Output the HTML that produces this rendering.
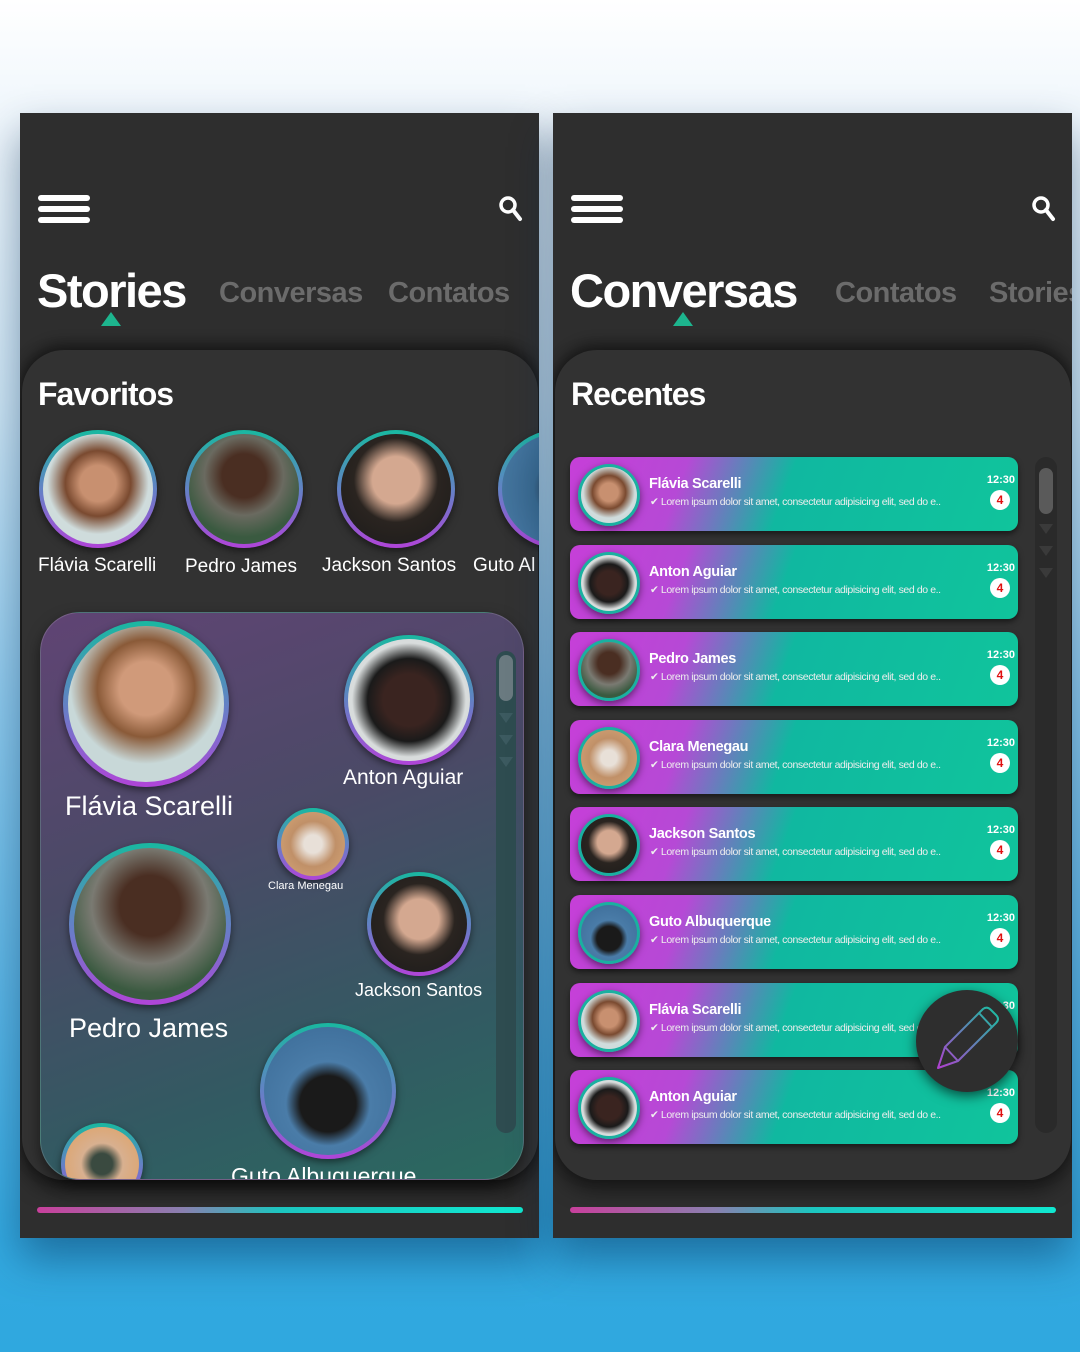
<!DOCTYPE html>
<html><head><meta charset="utf-8"><style>
*{margin:0;padding:0;box-sizing:border-box}
body{width:1080px;height:1352px;overflow:hidden;position:relative;font-family:"Liberation Sans",sans-serif;
background:linear-gradient(180deg,#ffffff 0px,#f4f9fd 80px,#cfe7f6 400px,#8fcbee 700px,#5ab6e6 1000px,#33a9e0 1240px,#2fa8df 1352px)}
.ph{position:absolute;top:113px;width:519px;height:1125px;background:#2e2e2e;overflow:hidden;box-shadow:0 20px 40px rgba(0,40,80,.45)}
.ab{position:absolute}
.menu{position:absolute;left:18px;top:82px;width:52px;height:30px}
.menu i{display:block;height:6px;background:#fff;border-radius:3px;margin-bottom:5px}
.title{position:absolute;top:150px;font-weight:bold;color:#fff;font-size:47px;letter-spacing:-1.5px}
.tab{position:absolute;top:164px;font-weight:bold;color:#6b6b6b;font-size:29px;letter-spacing:-.5px}
.tri{position:absolute;top:199px;width:0;height:0;border-left:10px solid transparent;border-right:10px solid transparent;border-bottom:14px solid #1db58e}
.inner{position:absolute;left:2px;top:237px;width:516px;height:830px;background:#323232;border-radius:42px;box-shadow:0 -6px 14px rgba(0,0,0,.45),0 10px 20px rgba(0,0,0,.5)}
.h2{position:absolute;top:263px;left:18px;font-weight:bold;color:#fff;font-size:32px;letter-spacing:-1px}
.av{position:absolute;border-radius:50%;background:linear-gradient(180deg,#19b8a0,#6a7cc8 55%,#b044d8);padding:4px;box-shadow:0 3px 8px rgba(0,0,0,.5)}
.av div{width:100%;height:100%;border-radius:50%}
.nm{position:absolute;color:#fff;font-size:19px;white-space:nowrap}
.bar{position:absolute;left:17px;top:1094px;width:486px;height:6px;border-radius:3px;background:linear-gradient(90deg,#c8409c,#8a80b0 30%,#1cc6c0 50%,#10e8d0)}
.card{position:absolute;left:17px;width:448px;height:74px;border-radius:10px;background:linear-gradient(110deg,#c63fd8 0%,#b649d6 25%,#10b8a0 48%,#10c49c 100%);box-shadow:0 3px 6px rgba(0,0,0,.5)}
.card .av{left:8px;top:7px;width:62px;height:62px;padding:3px;background:linear-gradient(#1ab0a0,#1ab0a0)}
.cn{position:absolute;left:79px;top:19px;color:#fff;font-weight:bold;font-size:14.5px;letter-spacing:-.3px}
.cm{position:absolute;left:80px;top:39px;color:#eee;font-size:10.5px;letter-spacing:-.4px;white-space:nowrap}
.ct{position:absolute;right:3px;top:17px;color:#fff;font-weight:bold;font-size:11px}
.bd{position:absolute;right:8px;top:33px;width:20px;height:20px;border-radius:50%;background:#fff;color:#e01010;font-weight:bold;font-size:12px;text-align:center;line-height:20px}
</style></head><body>

<!-- LEFT PHONE -->
<div class="ph" style="left:20px">
 <div class="menu"><i></i><i></i><i></i></div>
 <svg class="ab" style="left:478px;top:82px" width="26" height="28" viewBox="0 0 26 28"><circle cx="10" cy="10" r="7" fill="none" stroke="#fff" stroke-width="3.5"/><line x1="15" y1="15" x2="22" y2="24" stroke="#fff" stroke-width="4" stroke-linecap="round"/></svg>
 <div class="title" style="left:17px">Stories</div>
 <div class="tab" style="left:199px">Conversas</div>
 <div class="tab" style="left:368px">Contatos</div>
 <div class="tri" style="left:81px"></div>
 <div class="inner">
  <div class="h2" style="left:16px;top:26px">Favoritos</div>
  <div class="av" style="left:17px;top:80px;width:118px;height:118px"><div style="background:radial-gradient(circle at 50% 45%,#c89070 0 22%,#7a4a30 40%,#cfdcdc 62%)"></div></div>
  <div class="av" style="left:163px;top:80px;width:118px;height:118px"><div style="background:radial-gradient(circle at 50% 38%,#4a2e22 0 25%,#6a6a60 45%,#3a5a40 70%)"></div></div>
  <div class="av" style="left:315px;top:80px;width:118px;height:118px"><div style="background:radial-gradient(circle at 50% 42%,#d4a890 0 28%,#2a2420 50%,#1a1a1a)"></div></div>
  <div class="av" style="left:476px;top:80px;width:118px;height:118px"><div style="background:radial-gradient(circle at 60% 50%,#2a3240 0 15%,#3a6a90 40%,#4a7ca8)"></div></div>
  <div class="nm" style="left:16px;top:205px">Flávia Scarelli</div>
  <div class="nm" style="left:163px;top:206px">Pedro James</div>
  <div class="nm" style="left:300px;top:205px">Jackson Santos</div>
  <div class="nm" style="left:451px;top:205px">Guto Al</div>

  <div class="ab" style="left:18px;top:262px;width:484px;height:568px;border-radius:40px;background:linear-gradient(160deg,#604474 0%,#4a4a66 40%,#325a62 75%,#2a6a60 100%);overflow:hidden;box-shadow:0 6px 14px rgba(0,0,0,.5);border:1px solid rgba(255,255,255,.15)">
   <div class="ab" style="left:455px;top:38px;width:20px;height:482px;border-radius:10px;background:#2e4c50"></div>
   <div class="ab" style="left:458px;top:42px;width:14px;height:46px;border-radius:7px;background:#6a7a80"></div>
   <div class="ab" style="left:458px;top:100px;border-left:7px solid transparent;border-right:7px solid transparent;border-top:10px solid #3c5a60"></div>
   <div class="ab" style="left:458px;top:122px;border-left:7px solid transparent;border-right:7px solid transparent;border-top:10px solid #3c5a60"></div>
   <div class="ab" style="left:458px;top:144px;border-left:7px solid transparent;border-right:7px solid transparent;border-top:10px solid #3c5a60"></div>
   <div class="av" style="left:22px;top:8px;width:166px;height:166px;padding:5px"><div style="background:radial-gradient(circle at 50% 40%,#d09a7a 0 22%,#8a5a38 40%,#c8d8d8 62%)"></div></div>
   <div class="av" style="left:303px;top:22px;width:130px;height:130px"><div style="background:radial-gradient(circle at 50% 50%,#3a2420 0 30%,#1a1a1a 48%,#d8dcdc 66%)"></div></div>
   <div class="nm" style="left:302px;top:153px;font-size:21px">Anton Aguiar</div>
   <div class="nm" style="left:24px;top:178px;font-size:27px">Flávia Scarelli</div>
   <div class="av" style="left:236px;top:195px;width:72px;height:72px"><div style="background:radial-gradient(circle at 50% 50%,#e8e0d8 0 20%,#c09068 50%,#d8a878)"></div></div>
   <div class="nm" style="left:227px;top:267px;font-size:11px">Clara Menegau</div>
   <div class="av" style="left:28px;top:230px;width:162px;height:162px;padding:5px"><div style="background:radial-gradient(circle at 50% 38%,#4a2e22 0 25%,#7a7a72 48%,#3a5a40 72%)"></div></div>
   <div class="av" style="left:326px;top:259px;width:104px;height:104px"><div style="background:radial-gradient(circle at 50% 45%,#d4a890 0 28%,#2a2420 50%,#1a1a1a)"></div></div>
   <div class="nm" style="left:314px;top:367px;font-size:18px">Jackson Santos</div>
   <div class="nm" style="left:28px;top:400px;font-size:27px">Pedro James</div>
   <div class="av" style="left:219px;top:410px;width:136px;height:136px"><div style="background:radial-gradient(circle at 50% 60%,#1a1a1a 0 28%,#4a7ca8 42%,#3a6a96)"></div></div>
   <div class="av" style="left:20px;top:510px;width:82px;height:82px"><div style="background:radial-gradient(circle at 50% 50%,#3a4a40 0 20%,#d8b090 40%,#e0a060)"></div></div>
   <div class="nm" style="left:190px;top:550px;font-size:23px">Guto Albuquerque</div>
  </div>
 </div>
 <div class="bar"></div>
</div>

<!-- RIGHT PHONE -->
<div class="ph" style="left:553px">
 <div class="menu"><i></i><i></i><i></i></div>
 <svg class="ab" style="left:478px;top:82px" width="26" height="28" viewBox="0 0 26 28"><circle cx="10" cy="10" r="7" fill="none" stroke="#fff" stroke-width="3.5"/><line x1="15" y1="15" x2="22" y2="24" stroke="#fff" stroke-width="4" stroke-linecap="round"/></svg>
 <div class="title" style="left:17px">Conversas</div>
 <div class="tab" style="left:282px">Contatos</div>
 <div class="tab" style="left:436px">Stories</div>
 <div class="tri" style="left:120px"></div>
 <div class="inner">
  <div class="h2" style="left:16px;top:26px">Recentes</div>
  <div class="ab" style="left:480px;top:107px;width:22px;height:676px;border-radius:11px;background:#2a2a2a"></div>
  <div class="ab" style="left:484px;top:118px;width:14px;height:46px;border-radius:7px;background:#5a5a5a"></div>
  <div class="ab" style="left:484px;top:174px;border-left:7px solid transparent;border-right:7px solid transparent;border-top:10px solid #3a3a3a"></div>
  <div class="ab" style="left:484px;top:196px;border-left:7px solid transparent;border-right:7px solid transparent;border-top:10px solid #3a3a3a"></div>
  <div class="ab" style="left:484px;top:218px;border-left:7px solid transparent;border-right:7px solid transparent;border-top:10px solid #3a3a3a"></div>
 </div>

 <div class="card" style="top:344px"><div class="av"><div style="background:radial-gradient(circle at 50% 45%,#c89070 0 22%,#7a4a30 40%,#cfdcdc 62%)"></div></div><div class="cn">Flávia Scarelli</div><div class="cm">✔ Lorem ipsum dolor sit amet, consectetur adipisicing elit, sed do e..</div><div class="ct">12:30</div><div class="bd">4</div></div>
 <div class="card" style="top:432px"><div class="av"><div style="background:radial-gradient(circle at 50% 50%,#3a2420 0 30%,#1a1a1a 48%,#d8dcdc 66%)"></div></div><div class="cn">Anton Aguiar</div><div class="cm">✔ Lorem ipsum dolor sit amet, consectetur adipisicing elit, sed do e..</div><div class="ct">12:30</div><div class="bd">4</div></div>
 <div class="card" style="top:519px"><div class="av"><div style="background:radial-gradient(circle at 50% 38%,#4a2e22 0 25%,#7a7a72 48%,#3a5a40 72%)"></div></div><div class="cn">Pedro James</div><div class="cm">✔ Lorem ipsum dolor sit amet, consectetur adipisicing elit, sed do e..</div><div class="ct">12:30</div><div class="bd">4</div></div>
 <div class="card" style="top:607px"><div class="av"><div style="background:radial-gradient(circle at 50% 50%,#e8e0d8 0 20%,#c09068 50%,#d8a878)"></div></div><div class="cn">Clara Menegau</div><div class="cm">✔ Lorem ipsum dolor sit amet, consectetur adipisicing elit, sed do e..</div><div class="ct">12:30</div><div class="bd">4</div></div>
 <div class="card" style="top:694px"><div class="av"><div style="background:radial-gradient(circle at 50% 45%,#d4a890 0 28%,#2a2420 50%,#1a1a1a)"></div></div><div class="cn">Jackson Santos</div><div class="cm">✔ Lorem ipsum dolor sit amet, consectetur adipisicing elit, sed do e..</div><div class="ct">12:30</div><div class="bd">4</div></div>
 <div class="card" style="top:782px"><div class="av"><div style="background:radial-gradient(circle at 50% 60%,#1a1a1a 0 28%,#4a7ca8 42%,#3a6a96)"></div></div><div class="cn">Guto Albuquerque</div><div class="cm">✔ Lorem ipsum dolor sit amet, consectetur adipisicing elit, sed do e..</div><div class="ct">12:30</div><div class="bd">4</div></div>
 <div class="card" style="top:870px"><div class="av"><div style="background:radial-gradient(circle at 50% 45%,#c89070 0 22%,#7a4a30 40%,#cfdcdc 62%)"></div></div><div class="cn">Flávia Scarelli</div><div class="cm">✔ Lorem ipsum dolor sit amet, consectetur adipisicing elit, sed do e..</div><div class="ct">12:30</div><div class="bd">4</div></div>
 <div class="card" style="top:957px"><div class="av"><div style="background:radial-gradient(circle at 50% 50%,#3a2420 0 30%,#1a1a1a 48%,#d8dcdc 66%)"></div></div><div class="cn">Anton Aguiar</div><div class="cm">✔ Lorem ipsum dolor sit amet, consectetur adipisicing elit, sed do e..</div><div class="ct">12:30</div><div class="bd">4</div></div>

 <div class="ab" style="left:363px;top:877px;width:102px;height:102px;border-radius:50%;background:#2e2e2e;box-shadow:0 4px 12px rgba(0,0,0,.6)">
  <svg width="102" height="102" viewBox="0 0 102 102"><defs><linearGradient id="pg" x1="0" y1="1" x2="1" y2="0"><stop offset="0" stop-color="#b040d0"/><stop offset="1" stop-color="#18c0a0"/></linearGradient></defs>
  <path d="M22 78 L29 57 L67 19 Q71 16 75 20 L80 25 Q84 29 80 33 L42 71 Z M29 57 L42 71 M63 23 L76 37" fill="none" stroke="url(#pg)" stroke-width="2" stroke-linejoin="round"/></svg>
 </div>
 <div class="bar"></div>
</div>
</body></html>
